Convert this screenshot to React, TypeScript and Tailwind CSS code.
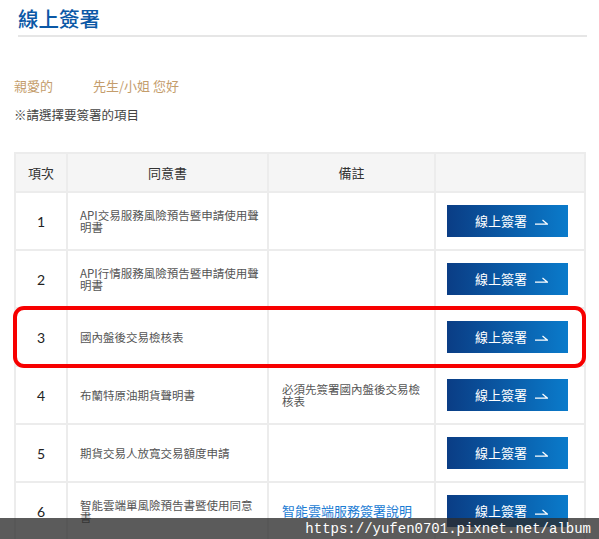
import React from 'react';

const rows = [
  { no: '1', title: 'API交易服務風險預告暨申請使用聲明書', note: '' },
  { no: '2', title: 'API行情服務風險預告暨申請使用聲明書', note: '' },
  { no: '3', title: '國內盤後交易檢核表', note: '' },
  { no: '4', title: '布蘭特原油期貨聲明書', note: '必須先簽署國內盤後交易檢核表' },
  { no: '5', title: '期貨交易人放寬交易額度申請', note: '' },
  { no: '6', title: '智能雲端單風險預告書暨使用同意書', note: 'link' },
];

const SignButton: React.FC = () => (
  <button className="flex h-[32px] w-[121px] items-center justify-center gap-[8px] bg-gradient-to-r from-[#0a3d85] to-[#0a7bcb] pl-[8px] text-[13px] text-white">
    <span>線上簽署</span>
    <svg width="13" height="7" viewBox="0 0 13 7" fill="none" stroke="white" strokeWidth="1.2">
      <path d="M0 6.2H12.5L7.5 2" />
    </svg>
  </button>
);

const App: React.FC = () => {
  return (
    <div
      className="relative h-[539px] w-[599px] overflow-hidden bg-white"
      style={{ fontFamily: '"Noto Sans CJK TC", "Noto Sans", sans-serif' }}
    >
      <div className="ml-[18px] mr-[12px] border-b-2 border-[#e6e6e6] pt-[4px] pb-[3px]">
        <h1 className="text-[20.5px] font-medium leading-[28px] text-[#0b58a6]">線上簽署</h1>
      </div>

      <div className="mt-[39px] ml-[14px] flex text-[13px] leading-[20px] text-[#c49d6c]">
        <span>親愛的</span>
        <span className="ml-[40px]">先生/小姐 您好</span>
      </div>
      <p className="mt-[10px] ml-[14px] text-[12.5px] leading-[18px] text-[#444]">※請選擇要簽署的項目</p>

      <table className="mt-[28px] ml-[14px] w-[570px] table-fixed border-collapse border-2 border-[#ececec]">
        <colgroup>
          <col className="w-[52px]" />
          <col className="w-[201px]" />
          <col className="w-[167px]" />
          <col className="w-[150px]" />
        </colgroup>
        <thead>
          <tr className="h-[39px] bg-[#f5f5f5] text-[13px] text-[#333]">
            <th className="border-2 border-[#ececec] font-normal">項次</th>
            <th className="border-2 border-[#ececec] font-normal">同意書</th>
            <th className="border-2 border-[#ececec] font-normal">備註</th>
            <th className="border-2 border-[#ececec] font-normal"></th>
          </tr>
        </thead>
        <tbody>
          {rows.map((r) => (
            <tr key={r.no} className="h-[58px]">
              <td
                className="border-2 border-[#ececec] text-center text-[14px] text-[#222]"
                style={{ fontFamily: 'Lato, "Noto Sans", sans-serif' }}
              >
                {r.no}
              </td>
              <td className="border-2 border-[#ececec] pl-[12px] pr-[8px] text-[11.5px] leading-[12px] text-[#555]">
                {r.title}
              </td>
              <td className="border-2 border-[#ececec] pl-[13px] pr-[10px] text-[11.5px] leading-[12px] text-[#555]">
                {r.note === 'link' ? (
                  <a className="text-[13px] leading-[18px] text-[#1a7bd3]">智能雲端服務簽署說明</a>
                ) : (
                  r.note
                )}
              </td>
              <td className="border-2 border-[#ececec] pl-[11px]">
                <SignButton />
              </td>
            </tr>
          ))}
        </tbody>
      </table>

      <div className="absolute left-[13px] top-[306px] h-[62px] w-[573px] rounded-[11px] border-4 border-[#f70000]" />

      <div className="absolute bottom-0 left-0 flex h-[21px] w-full items-center justify-end bg-[rgba(45,45,45,0.78)] pr-[8px]">
        <span
          className="text-[14px] leading-none text-white"
          style={{ fontFamily: '"Liberation Mono", monospace' }}
        >
          https://yufen0701.pixnet.net/album
        </span>
      </div>
    </div>
  );
};

export default App;
